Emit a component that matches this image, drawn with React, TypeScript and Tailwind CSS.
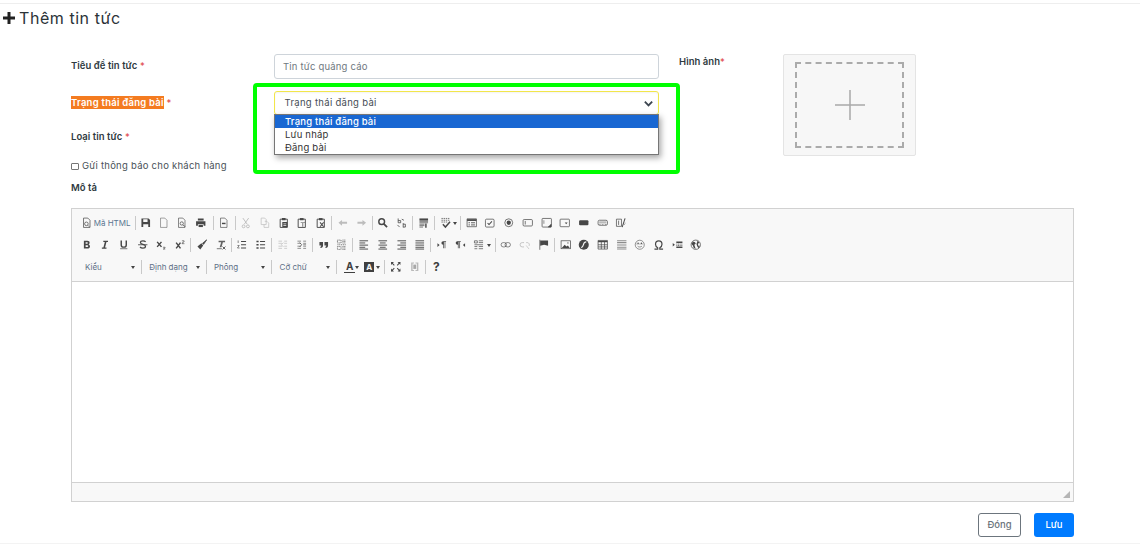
import React from 'react';

const FONT = "font-['Inter','Noto_Sans',sans-serif]";

// toolbar glyphs, all on a 16x16 grid
const icons: Record<string, React.ReactNode> = {
  source: <><path d="M3.5 1.5h6l3 3v10h-9z" fill="none" stroke="currentColor" /><circle cx="7.5" cy="9.5" r="2.5" fill="none" stroke="currentColor" /><path d="M9.5 11.5l2 2" stroke="currentColor" /></>,
  save: <><path d="M2 2h10l2 2v10H2z" fill="currentColor" /><path d="M4.5 3h6v4h-6zM4.5 10h7v4h-7z" fill="#f8f8f8" /></>,
  newpage: <path d="M3.5 1.5h6l3 3v10h-9z" fill="none" stroke="currentColor" strokeWidth="0.9" opacity="0.75" />,
  preview: <><path d="M3.5 1.5h6l3 3v10h-9z" fill="none" stroke="currentColor" strokeWidth="0.9" /><circle cx="8" cy="9" r="2.3" fill="none" stroke="currentColor" /><path d="M10 11l2.5 2.5" stroke="currentColor" strokeWidth="1.3" /></>,
  print: <><path d="M4 2h8v3H4zM1.5 6h13v6h-2.5v-2H4v2H1.5z" fill="currentColor" /><path d="M5 11h6v3H5z" fill="currentColor" /></>,
  template: <><path d="M3.5 1.5h6l3 3v10h-9z" fill="none" stroke="currentColor" strokeWidth="0.9" /><path d="M5.5 8h5v2h-5z" fill="currentColor" /></>,
  cut: <path d="M4 1.5l6 8.5M12 1.5l-6 8.5M3 13a2 2 0 1 0 4 0 2 2 0 1 0-4 0M9 13a2 2 0 1 0 4 0 2 2 0 1 0-4 0" fill="none" stroke="currentColor" strokeWidth="1.3" />,
  copy: <path d="M3 1.5h5l2 2v7H3zM8 6h3l2.5 2.5v6H7v-4" fill="none" stroke="currentColor" />,
  paste: <><path d="M3 3h10v11.500H3z" fill="none" stroke="currentColor" strokeWidth="1.3" /><path d="M5.500 1.500h5v3h-5zM6 7h7v7H6z" fill="currentColor" /><path d="M7.500 9h4v1h-4zM7.500 11h4v1h-4z" fill="#f8f8f8" /></>,
  pastetext: <><path d="M3 3h10v11.500H3z" fill="none" stroke="currentColor" strokeWidth="1.3" /><path d="M5.500 1.500h5v3h-5z" fill="currentColor" /><path d="M6.500 7.500h6v1h-2.500v5H9v-5H6.500z" fill="currentColor" /></>,
  pasteword: <><path d="M3 3h10v11.500H3z" fill="none" stroke="currentColor" strokeWidth="1.3" /><path d="M5.500 1.500h5v3h-5z" fill="currentColor" /><path d="M7 7.500l5 6M12 7.500l-5 6" stroke="currentColor" strokeWidth="1.4" /></>,
  undo: <path d="M7 4L2 8l5 4V9.500h7v-3H7z" fill="currentColor" />,
  redo: <path d="M9 4l5 4-5 4V9.500H2v-3h7z" fill="currentColor" />,
  find: <><circle cx="6.500" cy="6.500" r="4" fill="none" stroke="currentColor" strokeWidth="2" /><path d="M9.500 9.500l4.500 4.500" stroke="currentColor" strokeWidth="2.400" /></>,
  replace: <><path d="M3 2v6h3.500V5H3M10 8.500v6M10 10h3v4h-3M2 11l3 3M8 3l3 1.500" fill="none" stroke="currentColor" strokeWidth="1.100" /></>,
  selectall: <><path d="M2 2h12v3H2z" fill="currentColor" /><path d="M2 6h12M2 8h12M2 10h7M2 12h7M2 14h5" stroke="currentColor" /><path d="M11 9v6" stroke="currentColor" strokeWidth="2" /></>,
  spell: <><path d="M2 2h11M2 4.500h11M2 7h8" stroke="currentColor" strokeDasharray="2 1" /><path d="M4 10l3.500 4L14 6.500" fill="none" stroke="currentColor" strokeWidth="2" /></>,
  form: <><path d="M1.500 2.500h13v11h-13z" fill="none" stroke="currentColor" /><path d="M1.500 3h13v2.500h-13z" fill="currentColor" /><path d="M3.500 8h2M7 8h5.500M3.500 11h2M7 11h5.500" stroke="currentColor" strokeWidth="1.200" /></>,
  checkbox: <><rect x="2" y="3" width="12" height="11" rx="1.500" fill="none" stroke="currentColor" /><path d="M5 8.500l2 2 4-4.500" fill="none" stroke="currentColor" strokeWidth="1.400" /></>,
  radio: <><circle cx="8" cy="8" r="5.500" fill="none" stroke="currentColor" /><circle cx="8" cy="8" r="3" fill="currentColor" /></>,
  textfield: <><rect x="1.500" y="3.500" width="13" height="9" rx="1.500" fill="none" stroke="currentColor" /><path d="M4.500 5.500v5" stroke="currentColor" /></>,
  textarea: <><rect x="1.500" y="2" width="13" height="12" rx="1" fill="none" stroke="currentColor" /><path d="M4 4.500v5M14 10l-4 4h4z" fill="currentColor" stroke="currentColor" strokeWidth="0.800" /></>,
  select: <><rect x="1.500" y="3" width="13" height="10.500" rx="1" fill="none" stroke="currentColor" /><path d="M8 7.500h4L10 10z" fill="currentColor" /></>,
  button: <rect x="1.500" y="4.500" width="13" height="7" rx="1.500" fill="currentColor" />,
  imagebutton: <><rect x="1.500" y="4.500" width="13" height="7" rx="2" fill="none" stroke="currentColor" /><path d="M3 6h10v3H3z" fill="currentColor" opacity="0.35" /><path d="M4 10v1M8 10v1M12 10v1" stroke="currentColor" /></>,
  hidden: <><path d="M2 3h7v10H2z" fill="none" stroke="currentColor" /><path d="M10 14l4-12" stroke="currentColor" strokeWidth="1.400" /><path d="M13 10v1M14 8v1M5 5v6" stroke="currentColor" /></>,
  bold: <path d="M4 2.500h4.800c2 0 3.200 1 3.200 2.700 0 1.100-.6 1.900-1.500 2.300 1.200.3 2 1.300 2 2.600 0 2-1.400 3.200-3.600 3.200H4zm2.400 2v2.200h2c.7 0 1.200-.4 1.200-1.100s-.5-1.100-1.200-1.100zm0 4.100v2.700h2.300c.9 0 1.400-.5 1.400-1.400s-.5-1.300-1.400-1.300z" fill="currentColor" />,
  italic: <path d="M6 2.500h6.500v1.700h-2.100l-2 7.600h2v1.700H4v-1.700h2.100l2-7.600H6z" fill="currentColor" />,
  underline: <><path d="M4.500 2v6.200c0 2 1.300 3.100 3.500 3.100s3.500-1.100 3.500-3.100V2" fill="none" stroke="currentColor" strokeWidth="2" /><path d="M3 13.500h10" stroke="currentColor" strokeWidth="1.400" opacity="0.7" /></>,
  strike: <><path d="M12 4c-.8-1-2.100-1.500-3.700-1.500-2 0-3.500 1-3.500 2.500 0 3.300 7 1.800 7 5.200 0 1.600-1.500 2.600-3.600 2.600-1.700 0-3.100-.6-4-1.700" fill="none" stroke="currentColor" strokeWidth="1.800" /><path d="M1.500 8h13" stroke="currentColor" strokeWidth="1.200" /></>,
  sub: <><path d="M3 4l6 7M9 4l-6 7" stroke="currentColor" strokeWidth="2" /><path d="M11 11.500h3v1l-2.500 1.500h2.800" fill="none" stroke="currentColor" strokeWidth="0.900" /></>,
  sup: <><path d="M3 5l6 8M9 5l-6 8" stroke="currentColor" strokeWidth="2" /><path d="M11 2.500h3v1.500l-2.800 1.500v1H14.500" fill="none" stroke="currentColor" strokeWidth="0.900" /></>,
  brush: <><path d="M15 1l-6 5 1.500 1.500z" fill="currentColor" stroke="currentColor" /><path d="M7.500 6L2 10.500l4 4L10 9z" fill="currentColor" /></>,
  removeformat: <><path d="M5 2.500h9v2H11L9 11.500H6.500L8.600 4.500H5z" fill="currentColor" opacity="0.85" /><path d="M2.500 13.500h7" stroke="currentColor" /><path d="M10.500 10.500l4 4M14.500 10.500l-4 4" stroke="currentColor" strokeWidth="1.200" /></>,
  ol: <><path d="M7 3.500h7M7 8h7M7 12.500h7" stroke="currentColor" strokeWidth="1.500" /><path d="M3 2v3.500M2 9h2.500l-2.500 3.500H5" fill="none" stroke="currentColor" strokeWidth="0.900" /></>,
  ul: <><path d="M7 3.500h7M7 8h7M7 12.500h7" stroke="currentColor" strokeWidth="1.500" /><path d="M2 2.500h3v2H2zM2 7h3v2H2zM2 11.500h3v2H2z" fill="currentColor" /></>,
  outdent: <><path d="M2 3h5M2 6h5M2 10h5M2 13h5M10 3h4M10 6h4M10 10h4M10 13h4" stroke="currentColor" /><path d="M9 5L6 8l3 3" fill="none" stroke="currentColor" /></>,
  indent: <><path d="M2 3h5M2 6h5M2 10h5M2 13h5M10 3h4M10 6h4M10 8h4M10 10h4M10 13h4" stroke="currentColor" opacity="0.8" /><path d="M5 5l3 3-3 3" fill="none" stroke="currentColor" /></>,
  quote: <path d="M2 4h5v5c0 2-1.200 3-3.200 3.500L3 11c1-.3 1.500-.8 1.500-2H2zM9 4h5v5c0 2-1.200 3-3.200 3.500L10 11c1-.3 1.500-.8 1.500-2H9z" fill="currentColor" />,
  div: <path d="M2 1.500h5v4H2zM9 1.500h5M9 3.500h5M9 5.500h5M2 8h12M2 10.500h5v4H2zM9 10.500h5M9 12.500h5M9 14.500h5" fill="none" stroke="currentColor" strokeDasharray="1.500 1" />,
  left: <path d="M2 2.500h12M2 5.500h8M2 8.500h12M2 11.500h8M2 14h12" stroke="currentColor" strokeWidth="1.300" />,
  center: <path d="M2 2.500h12M4 5.500h8M2 8.500h12M4 11.500h8M2 14h12" stroke="currentColor" strokeWidth="1.300" />,
  right: <path d="M2 2.500h12M6 5.500h8M2 8.500h12M6 11.500h8M2 14h12" stroke="currentColor" strokeWidth="1.300" />,
  justify: <path d="M2 2.500h12M2 5.500h12M2 8.500h12M2 11.500h12M2 14h12" stroke="currentColor" strokeWidth="1.300" />,
  ltr: <><path d="M9 3h5v1h-1v9h-1V4h-1v9h-1V8a2.500 2.500 0 0 1 0-5z" fill="currentColor" /><path d="M2 6l3 2.500L2 11z" fill="currentColor" /></>,
  rtl: <><path d="M3 3h5v1H7v9H6V4H5v9H4V8a2.500 2.500 0 0 1-1-5z" fill="currentColor" /><path d="M14 6l-3 2.500L14 11z" fill="currentColor" /></>,
  lang: <path d="M2 2.500h4v3H2zM8 2.500h6M8 5h6M2 8h12M2 10.500h4M8 10.500h6M2 13.500h4M8 13.500h6" fill="none" stroke="currentColor" strokeWidth="1.200" opacity="0.8" />,
  link: <><rect x="1.500" y="5" width="7.500" height="6" rx="3" fill="none" stroke="currentColor" strokeWidth="1.100" opacity="0.8" /><rect x="7" y="5" width="7.500" height="6" rx="3" fill="none" stroke="currentColor" strokeWidth="1.100" opacity="0.8" /></>,
  unlink: <><path d="M7 5H4.500a3 3 0 0 0 0 6H7M10 5h1.500a3 3 0 0 1 2.500 4.500" fill="none" stroke="currentColor" strokeWidth="1.200" /><path d="M10 9l4 5" stroke="currentColor" /></>,
  flag: <><path d="M2.500 1v14" stroke="currentColor" /><path d="M3 2h11v7.500L8.500 8 3 9.500z" fill="currentColor" /></>,
  image: <><rect x="1.500" y="2.500" width="13" height="11" fill="none" stroke="currentColor" /><path d="M2.500 12.500l4-4.500 2.500 2.500 2-1.500 2.500 3.500z" fill="currentColor" /><circle cx="11" cy="5.500" r="1.200" fill="currentColor" opacity="0.5" /></>,
  flash: <><circle cx="8" cy="8" r="7" fill="currentColor" /><path d="M11.500 4c-3 0-3.500 2-4 4s-1 3.500-3 4" fill="none" stroke="#f8f8f8" strokeWidth="1.500" /></>,
  table: <><path d="M1.500 2h13v12h-13z" fill="none" stroke="currentColor" /><path d="M1.500 2.500h13v2h-13z" fill="currentColor" /><path d="M1.500 8h13M1.500 11h13M6 4v10M10.500 4v10" stroke="currentColor" /></>,
  hr: <path d="M1.500 2.500h13M1.500 5h13M1.500 8.300h13M1.500 11.500h13M1.500 14h13" stroke="currentColor" strokeWidth="1.500" opacity="0.6" />,
  smiley: <><circle cx="8" cy="8" r="6.300" fill="none" stroke="currentColor" opacity="0.8" /><path d="M3 7h10" stroke="currentColor" opacity="0.5" /><circle cx="5.700" cy="6" r="1" fill="currentColor" /><circle cx="10.300" cy="6" r="1" fill="currentColor" /><path d="M5 10c1.500 1.500 4.500 1.500 6 0" fill="none" stroke="currentColor" opacity="0.8" /></>,
  omega: <path d="M2 14h4.500v-1.800C4.500 11 3.500 9.300 3.500 7.300 3.500 4.300 5.300 2.500 8 2.500s4.500 1.800 4.500 4.800c0 2-1 3.700-3 4.900V14H14" fill="none" stroke="currentColor" strokeWidth="1.700" />,
  pagebreak: <><path d="M6 3.500h8.500v2H6zM6 10.500h8.500v2H6z" fill="currentColor" /><path d="M6 7h8.500M6 9h8.500" stroke="currentColor" strokeDasharray="1.500 .8" /><path d="M1 5.500l3 2.500-3 2.500z" fill="currentColor" /></>,
  iframe: <><circle cx="8" cy="8" r="6.500" fill="none" stroke="currentColor" /><path d="M4 3.500l3 1 1 2-2 1.500 1 3 1 3-3-2-1-3-2-2zM10 2.500l3 2.500-2 2 1 3 2-1-2 4-2-3-1-3 1-3z" fill="currentColor" /></>,
  maximize: <><path d="M2 2l4 4M14 2l-4 4M2 14l4-4M14 14l-4-4" stroke="currentColor" strokeWidth="1.400" /><path d="M1.500 1.500h4L1.500 5.500zM14.500 1.500h-4l4 4zM1.500 14.500h4l-4-4zM14.500 14.500h-4l4-4z" fill="currentColor" /></>,
  blocks: <><path d="M3 2h4v1.500H5v9h2V14H3zM9 2h4v12H9v-1.500h2v-9H9z" fill="currentColor" opacity="0.35" /><path d="M6 5h4v6H6z" fill="currentColor" opacity="0.45" /></>,
};

function Icon({ name, faded }: { name: string; faded?: boolean }) {
  return (
    <div className={`w-[18.7px] h-[22px] flex items-center justify-center shrink-0 ${faded ? 'text-[#bdbdbd]' : 'text-[#474747]'}`}>
      <svg viewBox="0 0 16 16" className="w-[11.5px] h-[11.5px]">{icons[name]}</svg>
    </div>
  );
}

function Sep() {
  return <div className="w-px h-[14px] bg-[#c9c9c9] mx-[1.1px] shrink-0" />;
}

function Arrow() {
  return <div className="w-0 h-0 border-x-[2.5px] border-x-transparent border-t-[3px] border-t-[#444] shrink-0" />;
}

function Row({ children }: { children: React.ReactNode }) {
  return <div className="flex items-center h-[22px]">{children}</div>;
}

function Group({ names, faded }: { names: string[]; faded?: boolean }) {
  return <>{names.map(n => <Icon key={n} name={n} faded={faded} />)}</>;
}

function Combo({ label, width }: { label: string; width: string }) {
  return (
    <div className={`flex items-center justify-between h-[22px] pl-[6px] pr-[5px] shrink-0 text-[8px] text-[#5d6f86] ${width}`}>
      <span>{label}</span>
      <Arrow />
    </div>
  );
}

function Toolbar() {
  return (
    <div className="h-[73px] bg-[#f8f8f8] border-b border-[#d1d1d1] pt-[3px] pl-[5px]">
      <Row>
        <Icon name="source" />
        <span className="text-[8px] text-[#5b7691] -ml-[2px] mr-[4px] w-[36px] whitespace-nowrap">Mã HTML</span>
        <Sep />
        <Icon name="save" />
        <div className="flex -ml-[1.5px] mr-[1.5px]">
          <Group names={['newpage', 'preview', 'print']} />
        </div>
        <Sep />
        <Icon name="template" />
        <Sep />
        <Group names={['cut', 'copy']} faded />
        <Group names={['paste', 'pastetext', 'pasteword']} />
        <Sep />
        <Group names={['undo', 'redo']} faded />
        <Sep />
        <Group names={['find', 'replace']} />
        <Sep />
        <Icon name="selectall" />
        <Sep />
        <Icon name="spell" />
        <div className="-ml-[2px] mr-[2px]"><Arrow /></div>
        <Sep />
        <Group names={['form', 'checkbox', 'radio', 'textfield', 'textarea', 'select', 'button', 'imagebutton', 'hidden']} />
      </Row>
      <Row>
        <Group names={['bold', 'italic', 'underline', 'strike', 'sub', 'sup']} />
        <Sep />
        <Group names={['brush', 'removeformat']} />
        <Sep />
        <Group names={['ol', 'ul']} />
        <Sep />
        <Icon name="outdent" faded />
        <Icon name="indent" />
        <Sep />
        <Group names={['quote', 'div']} />
        <Sep />
        <Group names={['left', 'center', 'right', 'justify']} />
        <Sep />
        <Group names={['ltr', 'rtl', 'lang']} />
        <div className="-ml-[2px] mr-[3px]"><Arrow /></div>
        <Sep />
        <Icon name="link" />
        <Icon name="unlink" faded />
        <Icon name="flag" />
        <Sep />
        <Group names={['image', 'flash', 'table', 'hr', 'smiley', 'omega', 'pagebreak', 'iframe']} />
      </Row>
      <Row>
        <div className="pl-[2px] flex shrink-0"><Combo label="Kiểu" width="w-[61px]" /></div>
        <Sep />
        <Combo label="Định dạng" width="w-[61.500px]" />
        <Sep />
        <Combo label="Phông" width="w-[62.500px]" />
        <Sep />
        <Combo label="Cỡ chữ" width="w-[61.500px]" />
        <Sep />
        <div className="w-[15px] h-[22px] flex flex-col items-center justify-center text-[#3f3f3f] ml-[4px] shrink-0">
          <span className="text-[10px] font-bold leading-[10px]">A</span>
          <div className="w-[11px] h-px bg-[#3f3f3f] mt-px" />
        </div>
        <div className="-ml-[2px]"><Arrow /></div>
        <div className="w-[10px] h-[9.5px] bg-[#3f3f3f] text-[#f8f8f8] text-[8px] font-bold leading-[10px] text-center ml-[5px] mr-[2px] shrink-0">A</div>
        <Arrow />
        <div className="w-[3px] shrink-0" />
        <Sep />
        <Icon name="maximize" />
        <Icon name="blocks" />
        <Sep />
        <div className="w-[18.7px] text-center text-[12px] font-bold text-[#3f3f3f]">?</div>
      </Row>
    </div>
  );
}

function Label({ children }: { children: React.ReactNode }) {
  return <span className="text-[9.5px] font-semibold text-[#2f3a3f] tracking-[0.05px]">{children}</span>;
}

function Star() {
  return <span className="text-[#e04848] font-normal"> *</span>;
}

export default function App() {
  return (
    <div className={`w-[1140px] h-[544px] bg-white overflow-hidden flex flex-col ${FONT}`}>
      <div className="h-[4px] border-b border-[#eeeeee] shrink-0" />
      <div className="h-[27px] flex items-center pl-[3px] gap-[4px] shrink-0">
        <svg viewBox="0 0 12 12" className="w-[12px] h-[12px] text-[#222]">
          <path d="M4.500 0h3v4.500H12v3H7.500V12h-3V7.500H0v-3h4.500z" fill="currentColor" />
        </svg>
        <h1 className="text-[16px] font-normal text-[#2b3338] tracking-[0.55px]">Thêm tin tức</h1>
      </div>

      <div className="flex pl-[71px] pt-[23px] h-[177px] shrink-0">
        <div className="w-[588px] shrink-0">
          <div className="flex items-start h-[37px]">
            <div className="w-[203px] leading-[19px]"><Label>Tiêu đề tin tức<Star /></Label></div>
            <div className="w-[385px] h-[25px] border border-[#ced4da] rounded-[3px] flex items-center pl-[8px] pt-[2px] text-[9.5px] text-[#6f7880] tracking-[0.2px]">
              Tin tức quảng cáo
            </div>
          </div>

          <div className="flex items-start h-[35px]">
            <div className="w-[203px] leading-[18px]">
              <span className="bg-[#f47b20] text-white text-[9.5px] font-semibold tracking-[0.25px] py-[1px]">Trạng thái đăng bài</span>
              <span className="text-[9.5px] text-[#e04848]"> *</span>
            </div>
            <div className="relative w-[385px] h-[24px]">
              <div className="h-full border border-[#f2e64b] rounded-[3px] flex items-center justify-between pl-[9.500px] pr-[4px] text-[9.5px] text-[#454d55] tracking-[0.3px] shadow-[inset_0_1px_2px_rgba(0,0,0,0.05)]">
                <span>Trạng thái đăng bài</span>
                <svg viewBox="0 0 12 12" className="w-[11px] h-[11px] text-[#3d4650]">
                  <path d="M2 4l4 4 4-4" fill="none" stroke="currentColor" strokeWidth="2" />
                </svg>
              </div>
              <div className="absolute left-0 right-0 top-[23px] z-10 bg-white border border-[#767676] shadow-[2px_3px_6px_rgba(0,0,0,0.35)] text-[9.5px] text-[#333] tracking-[0.2px] leading-[13px]">
                <div className="bg-[#1967d2] text-white font-medium pl-[10px]">Trạng thái đăng bài</div>
                <div className="pl-[10px]">Lưu nháp</div>
                <div className="pl-[10px]">Đăng bài</div>
              </div>
              <div className="absolute -left-[21px] -top-[8px] w-[427px] h-[91px] border-[4px] border-[#00ff00] rounded-[4px] z-20" />
            </div>
          </div>

          <div className="h-[31px] leading-[17px]"><Label>Loại tin tức<Star /></Label></div>

          <div className="flex items-center gap-[3.500px] h-[18px]">
            <div className="w-[7.5px] h-[7.5px] border border-[#767676] rounded-[1px] bg-white mt-[1px]" />
            <span className="text-[9.5px] text-[#4a5259] tracking-[0.25px]">Gửi thông báo cho khách hàng</span>
          </div>

          <div className="mt-[2px] leading-[16px]"><Label>Mô tả</Label></div>
        </div>

        <div className="w-[104px] ml-[20px] shrink-0 leading-[11px]">
          <Label>Hình ảnh<span className="text-[#e04848] font-normal">*</span></Label>
        </div>

        <div className="w-[133px] h-[102px] bg-[#f7f7f7] border border-[#e4e4e4] rounded-[2px] px-[11px] pt-[7px] pb-[7px] shrink-0">
          <div className="w-full h-full border-2 border-dashed border-[#ababab] flex items-center justify-center">
            <svg viewBox="0 0 30 30" className="w-[30px] h-[30px] text-[#a9a9a9]">
              <path d="M15 0v30M0 15h30" stroke="currentColor" strokeWidth="1.500" />
            </svg>
          </div>
        </div>
      </div>

      <div className="ml-[71px] w-[1003px] h-[294px] border border-[#d1d1d1] flex flex-col shrink-0">
        <Toolbar />
        <div className="flex-1 bg-white" />
        <div className="h-[19px] bg-[#f8f8f8] border-t border-[#d1d1d1] flex items-end justify-end pr-[3px] pb-[3px]">
          <svg viewBox="0 0 7 7" className="w-[7px] h-[7px] text-[#b5b5b5]">
            <path d="M7 0v7H0z" fill="currentColor" />
          </svg>
        </div>
      </div>

      <div className="ml-[71px] w-[1003px] flex justify-end gap-[13px] mt-[11px] shrink-0">
        <div className="w-[43px] h-[24px] border border-[#6c757d] rounded-[3px] flex items-center justify-center text-[9.5px] text-[#6c757d] font-medium">Đóng</div>
        <div className="w-[40px] h-[24px] bg-[#007bff] rounded-[3px] flex items-center justify-center text-[9.5px] text-white font-medium">Lưu</div>
      </div>

      <div className="mt-auto h-px bg-[#f3f3f3] shrink-0" />
    </div>
  );
}
